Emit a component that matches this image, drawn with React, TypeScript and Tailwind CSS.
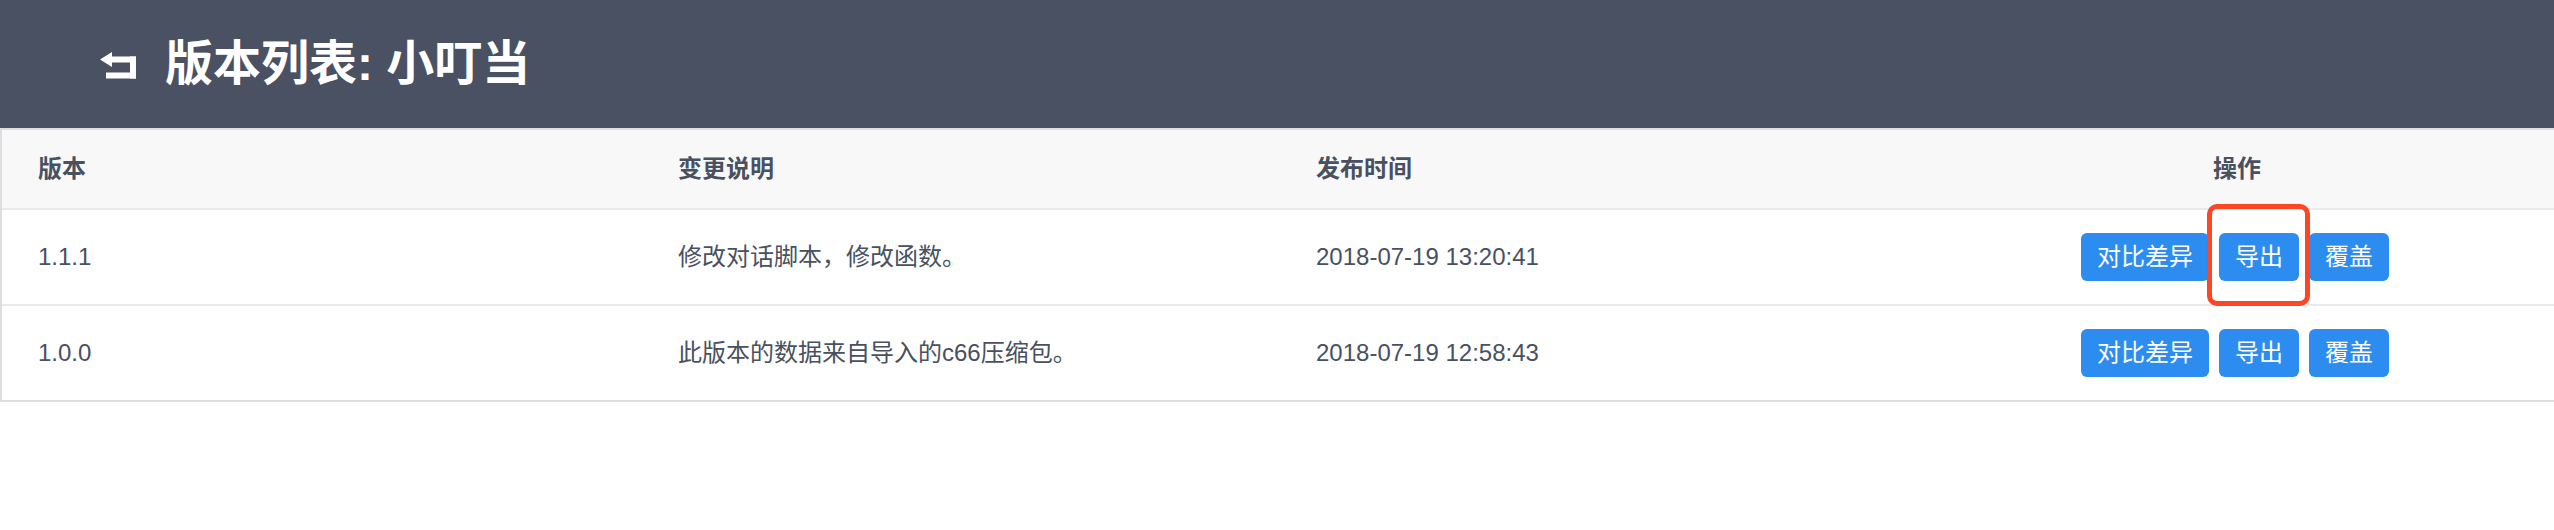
import React from "react";

const font = { fontFamily: '"Liberation Sans", "Noto Sans CJK SC", sans-serif' };

type Row = { v: string; desc: string; time: string; mark?: boolean };

const rows: Row[] = [
  { v: "1.1.1", desc: "修改对话脚本，修改函数。", time: "2018-07-19 13:20:41", mark: true },
  { v: "1.0.0", desc: "此版本的数据来自导入的c66压缩包。", time: "2018-07-19 12:58:43" },
];

function BackIcon() {
  return (
    <svg width="36" height="27" viewBox="0 0 36 27" className="shrink-0">
      <polygon points="0,7.5 12,0 12,15" fill="#ffffff" />
      <rect x="11" y="4.5" width="25" height="6" fill="#ffffff" />
      <rect x="30" y="4.5" width="6" height="22" fill="#ffffff" />
      <rect x="6" y="20.5" width="30" height="6" fill="#ffffff" />
    </svg>
  );
}

function Btn({ children, w }: { children: React.ReactNode; w: string }) {
  return (
    <div
      className={`h-[48px] ${w} flex items-center justify-center rounded-[6px] bg-[#2d8cf0] text-white text-[24px] leading-none`}
    >
      {children}
    </div>
  );
}

export default function App() {
  return (
    <div className="w-[2554px] min-h-[530px] bg-white text-[#495060]" style={font}>
      <header className="h-[128px] bg-[#4a5163] flex items-center pl-[100px]">
        <div className="mt-[2px]">
          <BackIcon />
        </div>
        <h1 className="ml-[29px] text-white text-[48px] font-semibold leading-none tracking-[0px]">
          版本列表: 小叮当
        </h1>
      </header>

      <div className="border-l-2 border-t-2 border-[#dddee1]">
        <div className="grid grid-cols-[638px_638px_638px_1fr] h-[80px] bg-[#f8f8f9] border-b-2 border-[#e9eaec] text-[24px] font-bold">
          <div className="flex items-center pl-[36px]">版本</div>
          <div className="flex items-center pl-[38px]">变更说明</div>
          <div className="flex items-center pl-[38px]">发布时间</div>
          <div className="flex items-center justify-center pl-[4px]">操作</div>
        </div>
        {rows.map((r, i) => (
          <div
            key={r.v}
            className={`grid grid-cols-[638px_638px_638px_1fr] h-[96px] border-b-2 text-[24px] ${
              i === rows.length - 1 ? "border-[#dddee1]" : "border-[#e9eaec]"
            }`}
          >
            <div className="flex items-center pl-[36px]">{r.v}</div>
            <div className="flex items-center pl-[38px]">{r.desc}</div>
            <div className="flex items-center pl-[38px]">{r.time}</div>
            <div className="flex items-center justify-center gap-[10px]">
              <Btn w="w-[128px]">对比差异</Btn>
              <div className="relative">
                <Btn w="w-[80px]">导出</Btn>
                {r.mark && (
                  <div className="absolute -left-[12px] -top-[29px] w-[103px] h-[102px] border-[5px] border-[#fd4624] rounded-[10px]" />
                )}
              </div>
              <Btn w="w-[80px]">覆盖</Btn>
            </div>
          </div>
        ))}
      </div>
    </div>
  );
}
